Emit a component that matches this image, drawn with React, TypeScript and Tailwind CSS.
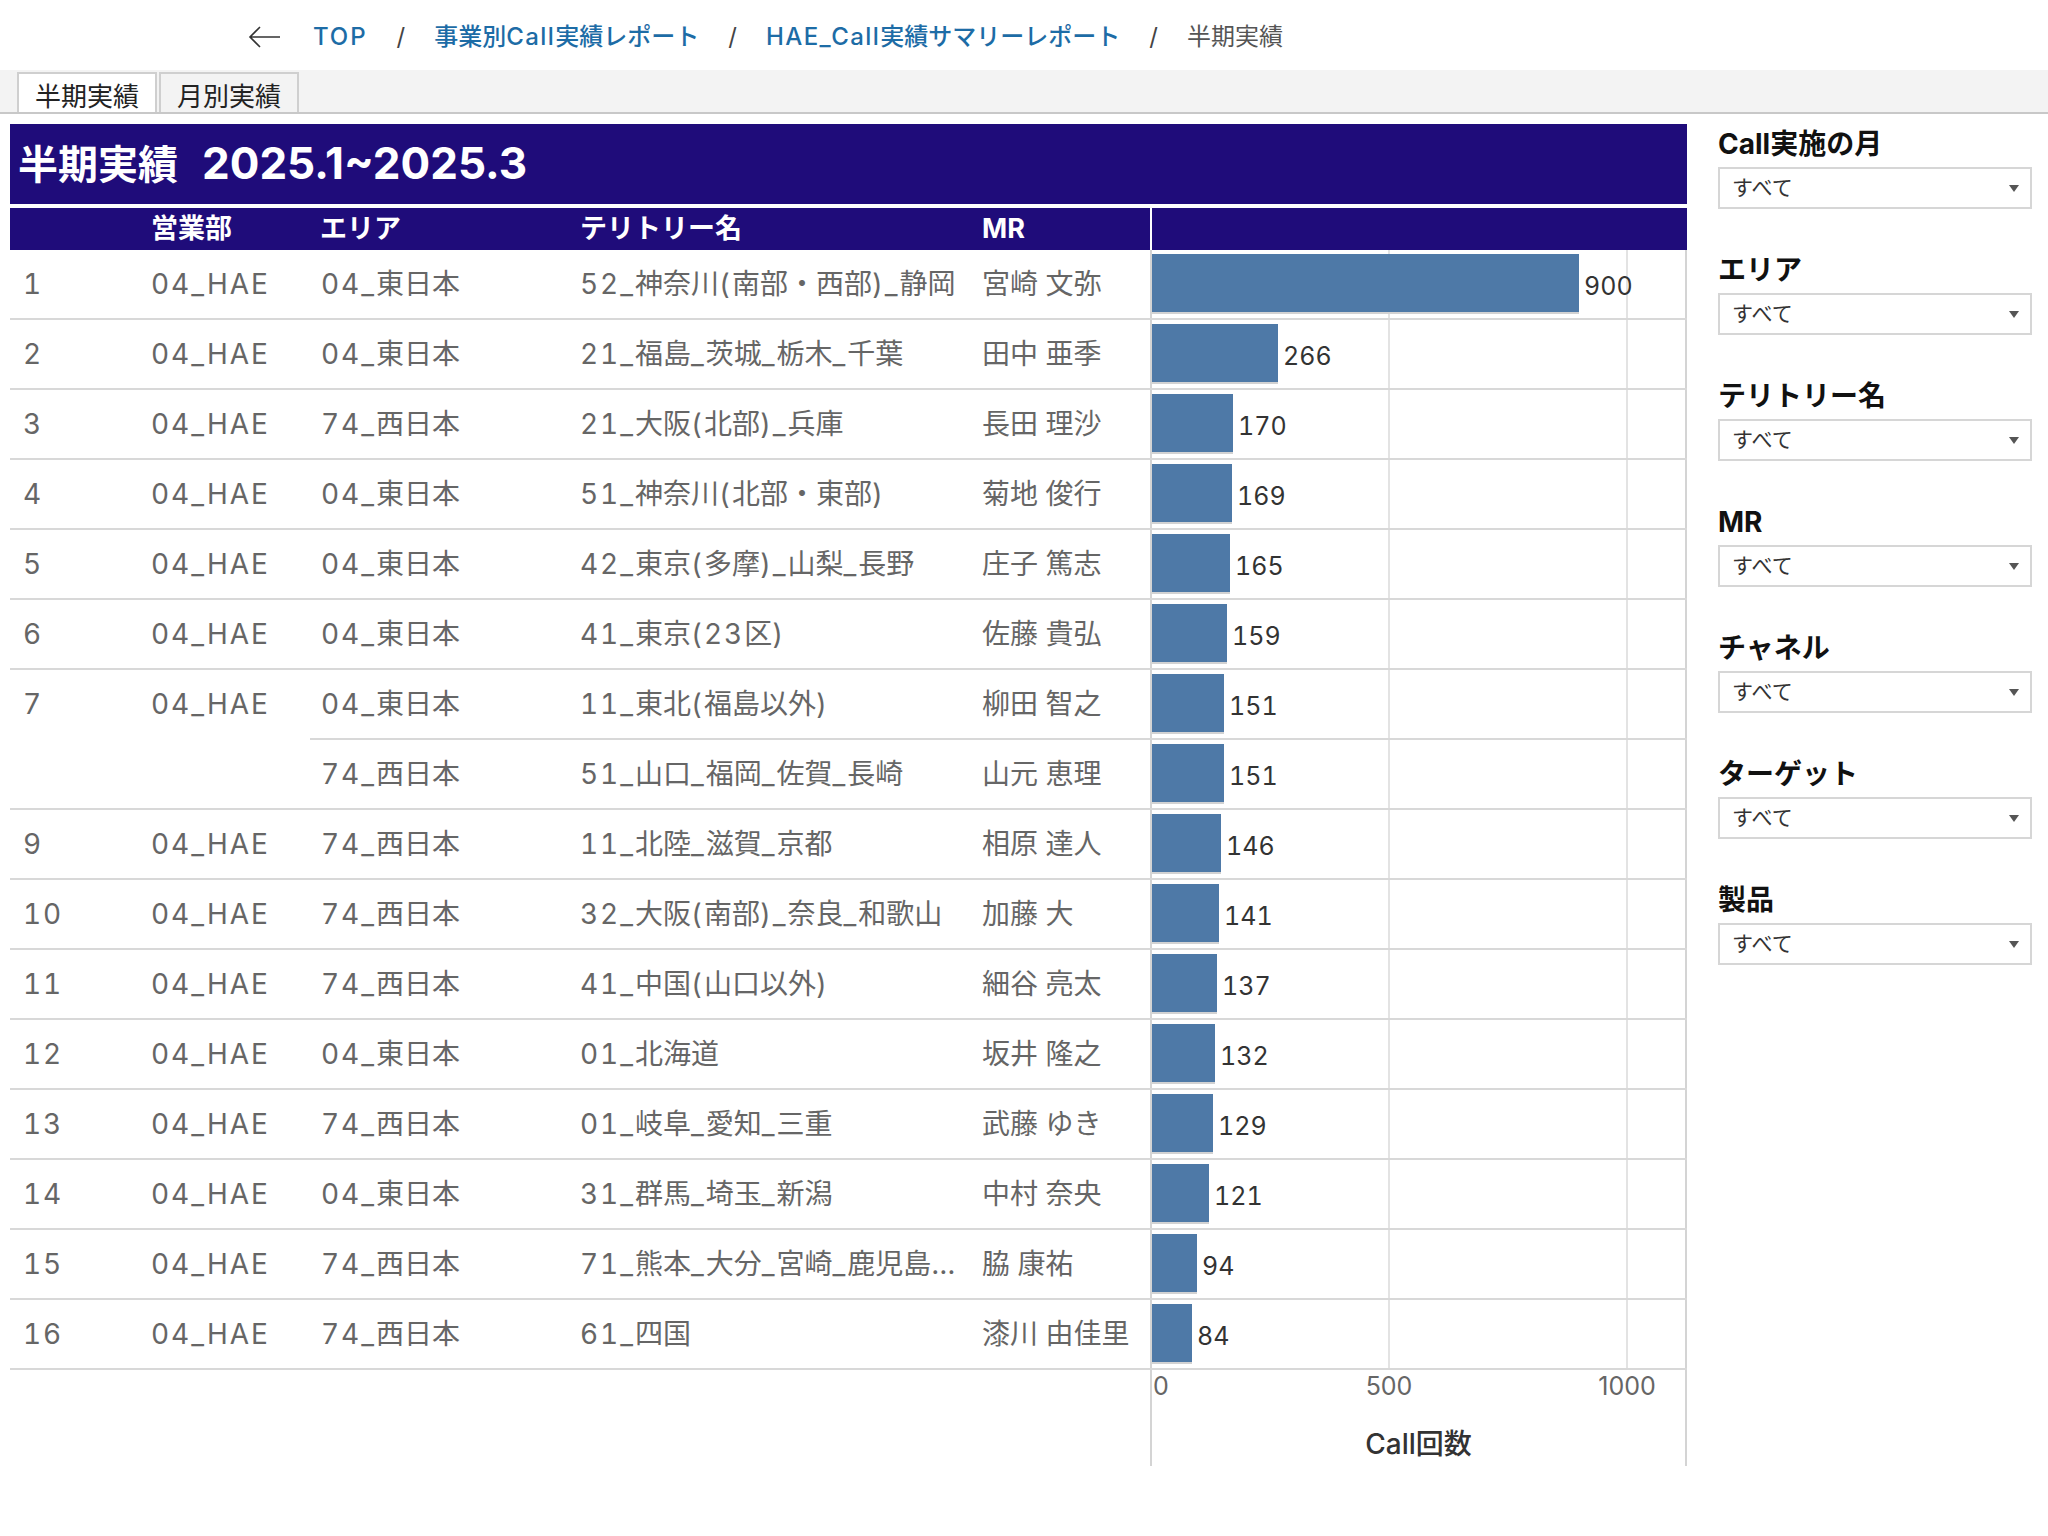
import React from 'react';

type Item = { area: string; territory: string; mr: string; calls: number };
type Group = { rank: number; dept: string; items: Item[] };

const groups: Group[] = [
  { rank: 1, dept: '04_HAE', items: [{ area: '04_東日本', territory: '52_神奈川(南部・西部)_静岡', mr: '宮崎 文弥', calls: 900 }] },
  { rank: 2, dept: '04_HAE', items: [{ area: '04_東日本', territory: '21_福島_茨城_栃木_千葉', mr: '田中 亜季', calls: 266 }] },
  { rank: 3, dept: '04_HAE', items: [{ area: '74_西日本', territory: '21_大阪(北部)_兵庫', mr: '長田 理沙', calls: 170 }] },
  { rank: 4, dept: '04_HAE', items: [{ area: '04_東日本', territory: '51_神奈川(北部・東部)', mr: '菊地 俊行', calls: 169 }] },
  { rank: 5, dept: '04_HAE', items: [{ area: '04_東日本', territory: '42_東京(多摩)_山梨_長野', mr: '庄子 篤志', calls: 165 }] },
  { rank: 6, dept: '04_HAE', items: [{ area: '04_東日本', territory: '41_東京(23区)', mr: '佐藤 貴弘', calls: 159 }] },
  {
    rank: 7,
    dept: '04_HAE',
    items: [
      { area: '04_東日本', territory: '11_東北(福島以外)', mr: '柳田 智之', calls: 151 },
      { area: '74_西日本', territory: '51_山口_福岡_佐賀_長崎', mr: '山元 恵理', calls: 151 },
    ],
  },
  { rank: 9, dept: '04_HAE', items: [{ area: '74_西日本', territory: '11_北陸_滋賀_京都', mr: '相原 達人', calls: 146 }] },
  { rank: 10, dept: '04_HAE', items: [{ area: '74_西日本', territory: '32_大阪(南部)_奈良_和歌山', mr: '加藤 大', calls: 141 }] },
  { rank: 11, dept: '04_HAE', items: [{ area: '74_西日本', territory: '41_中国(山口以外)', mr: '細谷 亮太', calls: 137 }] },
  { rank: 12, dept: '04_HAE', items: [{ area: '04_東日本', territory: '01_北海道', mr: '坂井 隆之', calls: 132 }] },
  { rank: 13, dept: '04_HAE', items: [{ area: '74_西日本', territory: '01_岐阜_愛知_三重', mr: '武藤 ゆき', calls: 129 }] },
  { rank: 14, dept: '04_HAE', items: [{ area: '04_東日本', territory: '31_群馬_埼玉_新潟', mr: '中村 奈央', calls: 121 }] },
  { rank: 15, dept: '04_HAE', items: [{ area: '74_西日本', territory: '71_熊本_大分_宮崎_鹿児島…', mr: '脇 康祐', calls: 94 }] },
  { rank: 16, dept: '04_HAE', items: [{ area: '74_西日本', territory: '61_四国', mr: '漆川 由佳里', calls: 84 }] },
];

const filters = ['Call実施の月', 'エリア', 'テリトリー名', 'MR', 'チャネル', 'ターゲット', '製品'];

// px per call on the bar axis
const SCALE = 0.474;

export default function App() {
  return (
    <div className="min-h-[1536px] w-[2048px] bg-white font-['Inter','Noto_Sans_CJK_JP',sans-serif]">
      {/* Breadcrumb */}
      <div className="flex h-[70px] items-center pl-[248px] pt-[3px] text-[24px]">
        <svg width="33" height="22" viewBox="0 0 33 22" fill="none" stroke="#333" strokeWidth="1.6">
          <path d="M32 11H2M12 1L2 11l10 10" />
        </svg>
        <div className="ml-[32px] flex items-center gap-[29px]">
          <span className="font-medium text-[#1d6ca6]"><Wide text="TOP" cls="tracking-[0.08em]" /></span>
          <span className="text-[#444]">/</span>
          <span className="font-medium text-[#1d6ca6]"><Wide text="事業別Call実績レポート" cls="tracking-[0.06em]" /></span>
          <span className="text-[#444]">/</span>
          <span className="font-medium text-[#1d6ca6]"><Wide text="HAE_Call実績サマリーレポート" cls="tracking-[0.06em]" /></span>
          <span className="text-[#444]">/</span>
          <span className="text-[#555]">半期実績</span>
        </div>
      </div>

      {/* Tabs */}
      <div className="flex h-[44px] items-end border-b-2 border-[#c8c8c8] bg-[#f3f3f3] pl-[17px]">
        <div className="flex h-[40px] w-[140px] items-center justify-center border-2 border-b-0 border-[#cfcfcf] bg-white pt-[6px] text-[26px] text-[#222]">
          半期実績
        </div>
        <div className="ml-[2px] flex h-[40px] w-[140px] items-center justify-center border-2 border-b-0 border-[#cfcfcf] bg-[#f3f3f3] pt-[6px] text-[26px] text-[#222]">
          月別実績
        </div>
      </div>

      <div className="mt-[10px] flex pl-[10px]">
        {/* Table + chart */}
        <div className="w-[1677px]">
          <div className="flex h-[80px] items-center bg-[#1f0c7a] pl-[8px] font-bold text-white">
            <div className="text-[40px] leading-[50px]">
              半期実績<span className="ml-[24px] text-[44px]">2025.1~2025.3</span>
            </div>
          </div>

          <div className="mt-[4px] flex h-[42px] bg-[#1f0c7a] text-[27px] font-bold text-white">
            <div className="w-[141px]" />
            <div className="flex w-[159px] items-center">営業部</div>
            <div className="flex w-[270px] items-center pl-[10px]">エリア</div>
            <div className="flex w-[402px] items-center">テリトリー名</div>
            <div className="flex w-[168px] items-center">MR</div>
            <div className="w-[537px] border-l-2 border-white" />
          </div>

          {groups.map((g) => (
            <div key={g.rank} className="flex border-b-2 border-[#d8d8d8] text-[28px] text-[#666] tabular-nums">
              <div className="flex h-[68px] w-[141px] items-center pl-[13px]">
                <Wide text={String(g.rank)} />
              </div>
              <div className="flex h-[68px] w-[159px] items-center">
                <Wide text={g.dept} />
              </div>
              <div className="flex flex-col">
                {g.items.map((it, i) => (
                  <div
                    key={it.mr}
                    className={
                      i < g.items.length - 1
                        ? 'flex h-[70px] border-b-2 border-[#d8d8d8]'
                        : 'flex h-[68px]'
                    }
                  >
                    <div className="flex w-[270px] items-center pl-[11px]">
                      <Wide text={it.area} />
                    </div>
                    <div className="flex w-[402px] items-center overflow-hidden whitespace-nowrap">
                      <Wide text={it.territory} />
                    </div>
                    <div className="flex w-[168px] items-center whitespace-nowrap">{it.mr}</div>
                    <BarCell calls={it.calls} />
                  </div>
                ))}
              </div>
            </div>
          ))}

          {/* Axis */}
          <div className="flex">
            <div className="w-[1140px]" />
            <div className="relative h-[96px] w-[537px] border-x-2 border-[#d4d4d4] text-[25px] leading-[30px] text-[#666]">
              <span className="absolute left-[1px] top-[1px]">0</span>
              <span className="absolute left-[237px] top-[1px] -translate-x-1/2">500</span>
              <span className="absolute left-[475px] top-[1px] -translate-x-1/2">1000</span>
              <div className="absolute inset-x-0 top-[57px] text-center text-[28px] font-medium leading-[34px] text-[#333]">
                Call回数
              </div>
            </div>
          </div>
        </div>

        {/* Filters */}
        <div className="ml-[31px] w-[314px] pt-[3px]">
          {filters.map((f) => (
            <div key={f} className="mb-[44px]">
              <div className="text-[28px] font-bold leading-[34px] text-[#111]">{f}</div>
              <div className="mt-[6px] flex h-[42px] items-center justify-between border-2 border-[#d6d6d6] pl-[12px] pr-[11px]">
                <span className="text-[21px] text-[#333]">すべて</span>
                <svg width="10" height="7" viewBox="0 0 10 7">
                  <polygon points="0,0 10,0 5,7" fill="#555" />
                </svg>
              </div>
            </div>
          ))}
        </div>
      </div>
    </div>
  );
}

// ── Latin runs set a little wider than the CJK around them ──────────

function Wide({ text, cls = 'tracking-[0.07em]' }: { text: string; cls?: string }) {
  const parts = text.split(/([\u0020-\u007e]+)/).filter(Boolean);
  return (
    <>
      {parts.map((p, i) =>
        /^[\u0020-\u007e]+$/.test(p) ? (
          <span key={i} className={cls}>
            {p}
          </span>
        ) : (
          <React.Fragment key={i}>{p}</React.Fragment>
        ),
      )}
    </>
  );
}

// ── Bar cell ─────────────────────────────────────────────────

function BarCell({ calls }: { calls: number }) {
  return (
    <div className="relative h-full w-[537px] border-x-2 border-[#d4d4d4]">
      <div className="absolute bottom-0 left-[236px] top-0 w-[2px] bg-[#e3e3e3]" />
      <div className="absolute bottom-0 left-[474px] top-0 w-[2px] bg-[#e3e3e3]" />
      <div className="relative flex h-full pt-[4px]">
        <div
          className="h-[58px] bg-[#4e79a7] shadow-[0_2px_0_#d2d2d2]"
          style={{ width: Math.round(calls * SCALE) }}
        />
        <span className="ml-[5px] self-center pt-[1px] text-[25px] text-[#333]">{calls}</span>
      </div>
    </div>
  );
}
